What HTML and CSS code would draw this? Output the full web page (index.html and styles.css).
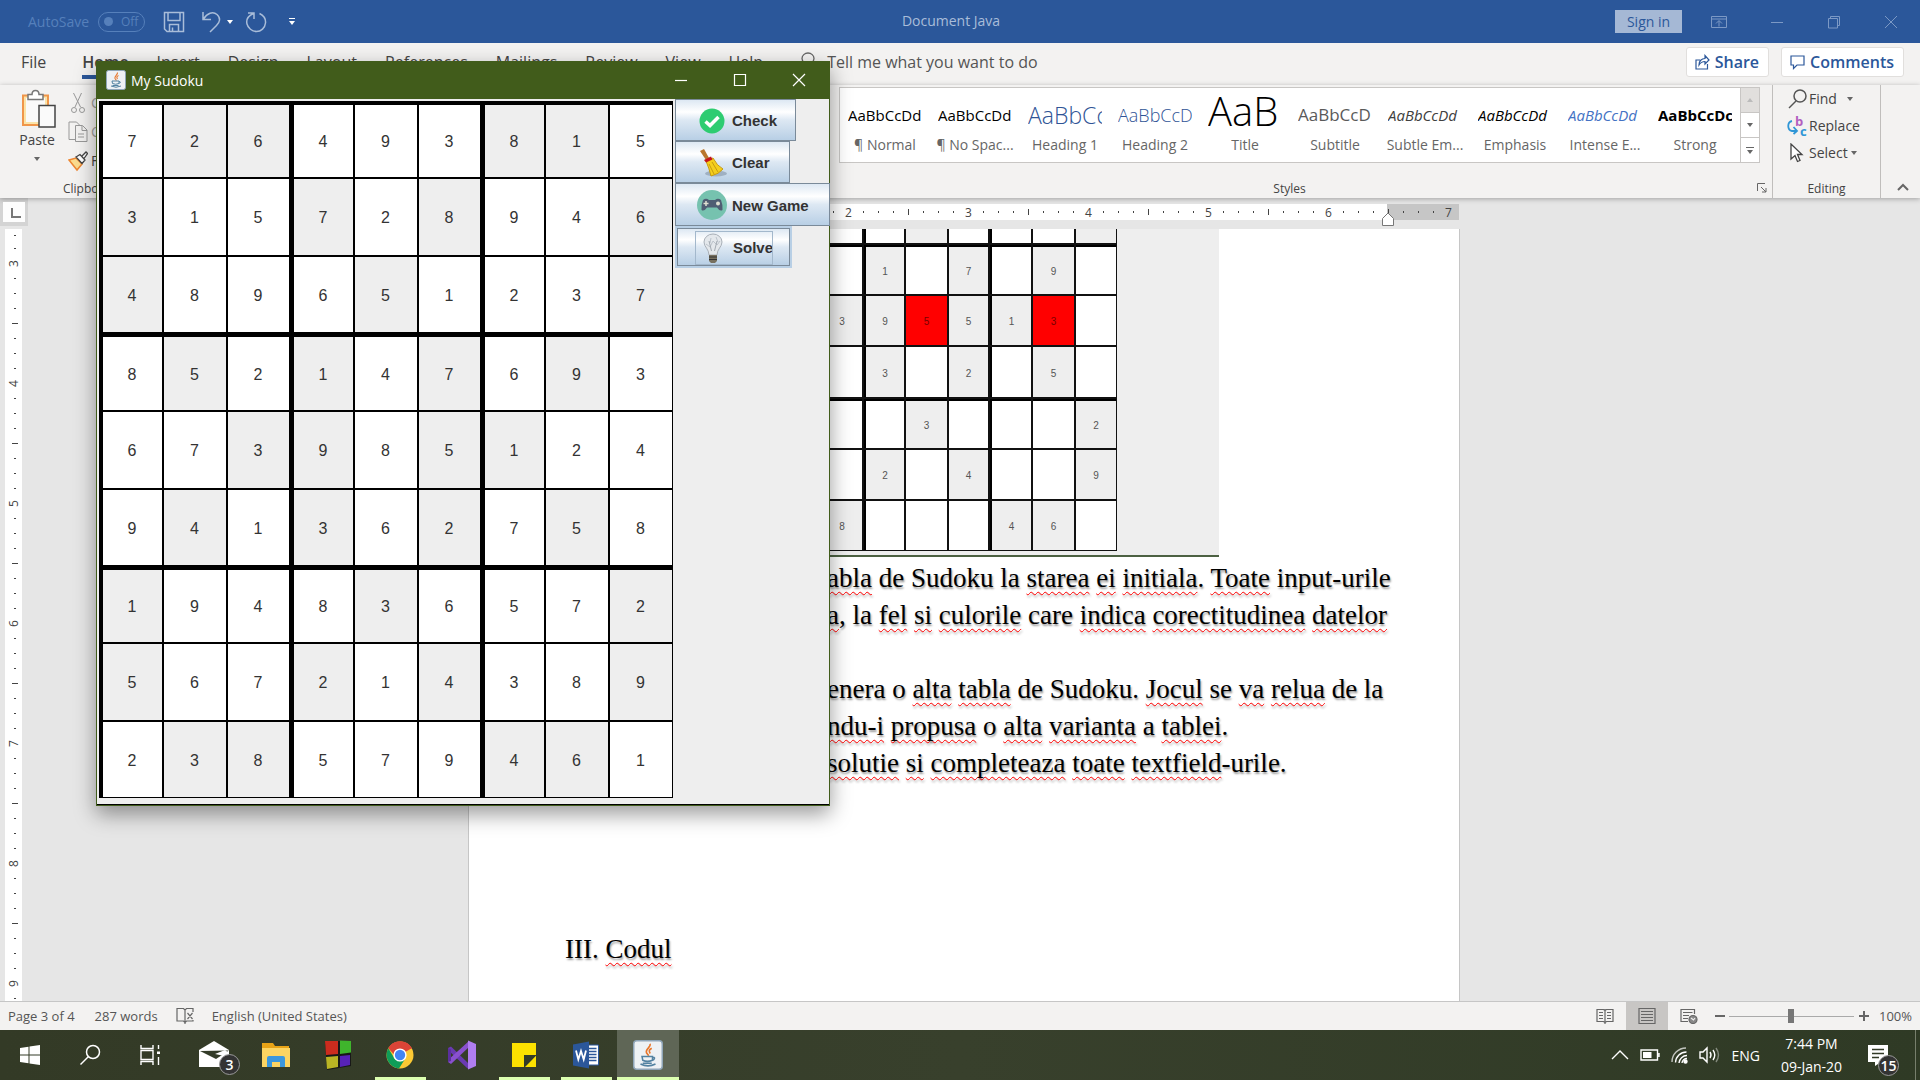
FILE: index.html
```html
<!DOCTYPE html>
<html lang="en">
<head>
<meta charset="utf-8">
<title>Document Java - Word</title>
<link rel="stylesheet" href="styles.css">
</head>
<body>
<div class="word">
  <header class="titlebar">
    <div class="quick">
      <span class="autosave">AutoSave</span>
      <button class="toggle" aria-label="AutoSave off"><i></i>Off</button>
      <button class="plain save" aria-label="Save"><svg width="22" height="22" viewBox="0 0 22 22"><path d="M1.500 1.500H20.500V20.500H4L1.500 18ZM5 1.500V9.500H17V1.500M6.500 20V13.500H15.500V20M9.500 20V16.500"/></svg></button>
      <button class="plain undo" aria-label="Undo"><svg width="22" height="22" viewBox="0 0 22 22"><path d="M2 1V8.500H10M2.500 8C6 2 12 0 16 3.500S19 11 15.500 14.500L9 21"/></svg></button>
      <span class="caret light"></span>
      <button class="plain redo" aria-label="Repeat"><svg width="22" height="22" viewBox="0 0 22 22"><path d="M3 2H9V8M8.500 2.500C3 5 1 9 2 13S7 20.500 11.500 20.500 20 17 20.500 12 18.500 4.500 14.500 2.500"/></svg></button>
      <span class="customize"><span class="caret light"></span></span>
    </div>
    <div class="doc-title">Document Java</div>
    <div class="win-tools">
      <button class="signin">Sign in</button>
      <button class="plain" aria-label="Ribbon display options"><svg width="16" height="14" viewBox="0 0 16 14"><path d="M.5 1.500H15.500V12.500H.5ZM.5 4H15.500M8 11.500V6M5 8.500 8 5.500 11 8.500"/></svg></button>
      <button class="plain" aria-label="Minimize"><svg width="14" height="14" viewBox="0 0 14 14"><path d="M1 7.500H13"/></svg></button>
      <button class="plain" aria-label="Restore"><svg width="14" height="14" viewBox="0 0 14 14"><path d="M1.500 3.500H10.500V13H1.500ZM3.500 3.500V1.500H12.500V10.500H10.500"/></svg></button>
      <button class="plain" aria-label="Close"><svg width="14" height="14" viewBox="0 0 14 14"><path d="M1 1 13 13M13 1 1 13"/></svg></button>
    </div>
  </header>

  <nav class="tabs">
    <a href="#">File</a>
    <a href="#" class="active">Home</a>
    <a href="#">Insert</a>
    <a href="#">Design</a>
    <a href="#">Layout</a>
    <a href="#">References</a>
    <a href="#">Mailings</a>
    <a href="#">Review</a>
    <a href="#">View</a>
    <a href="#">Help</a>
    <a href="#" class="tell"><svg width="14" height="20" viewBox="0 0 14 20"><path d="M4.500 14C4.500 11 1 10 1 6.500A6 5.500 0 0 1 13 6.500C13 10 9.500 11 9.500 14ZM4.500 17H9.500"/></svg>Tell me what you want to do</a>
    <span class="tab-actions">
      <button class="pill"><svg width="15" height="16" viewBox="0 0 15 16"><path d="M5 6H1V15H12.500V10M4 11C4 7 6.500 4.500 10 4.500V1.500L14 6 10 10V7.500C7.500 7.500 5.500 8.500 4 11Z"/></svg>Share</button>
      <button class="pill"><svg width="15" height="16" viewBox="0 0 15 16"><path d="M1 2H14V11H7L3.500 14.500V11H1Z"/></svg>Comments</button>
    </span>
  </nav>

  <section class="ribbon">
    <div class="clipboard">
      <div class="clip-tools">
        <button class="paste">
          <svg width="40" height="42" viewBox="0 0 40 42"><g transform="translate(4 1)"><path d="M2 6.500H27V36H2Z" fill="#fbe3a7" stroke="#f0964a" stroke-width="2"/><path d="M5 9H24V33H5Z" fill="#fafafa"/><path d="M7 10.500V5.500H11C11 0 18 0 18 5.500H22V10.500Z" fill="#fff" stroke="#777" stroke-width="1.500"/><path d="M18 16.500H34V38H18Z" fill="#fafafa" stroke="#444" stroke-width="1.500"/></g></svg>
          <span>Paste</span>
          <span class="caret"></span>
        </button>
        <div class="clip-list">
          <button><svg width="20" height="22" viewBox="0 0 20 22"><path d="M5.500 1 12.500 15M13.500 1 7 15" stroke="#999"/><circle cx="6" cy="18" r="2.500" stroke="#999"/><circle cx="14" cy="18" r="2.500" stroke="#999"/></svg>Cut</button>
          <button><svg width="20" height="22" viewBox="0 0 20 22"><path d="M7 18.500H1V1H8.500L11.500 4M7.500 4.500H14.500L19 9V20.500H7.500ZM14 5V9.500H19M10 13H16M10 16H16" stroke="#999"/></svg>Copy</button>
          <button class="painter"><svg width="20" height="22" viewBox="0 0 20 22"><path d="M1 10 8 8 14 14 9 20Z" fill="#fbdc8f" stroke="#ed8733" stroke-width="1.500"/><path d="M8 7 12 4.500 17 10 14 13.500ZM14 6 18 2 19.500 3.500 16 8.500" fill="#fff" stroke="#444" stroke-width="1.300"/></svg>Format Painter</button>
        </div>
      </div>
      <div class="group-label">Clipboard</div>
    </div>

    <div class="styles">
      <div class="gallery">
        <div class="style-items">
          <button><b class="s-normal">AaBbCcDd</b><span>¶ Normal</span></button>
          <button><b class="s-normal">AaBbCcDd</b><span>¶ No Spac...</span></button>
          <button><b class="s-h1">AaBbCc</b><span>Heading 1</span></button>
          <button><b class="s-h2">AaBbCcD</b><span>Heading 2</span></button>
          <button><b class="s-title">AaB</b><span>Title</span></button>
          <button><b class="s-sub">AaBbCcD</b><span>Subtitle</span></button>
          <button><b class="s-subtle">AaBbCcDd</b><span>Subtle Em...</span></button>
          <button><b class="s-emph">AaBbCcDd</b><span>Emphasis</span></button>
          <button><b class="s-intense">AaBbCcDd</b><span>Intense E...</span></button>
          <button><b class="s-strong">AaBbCcDc</b><span>Strong</span></button>
        </div>
        <div class="gallery-scroll">
          <button class="off" aria-label="Scroll up"><span class="caret up"></span></button>
          <button aria-label="Scroll down"><span class="caret"></span></button>
          <button class="more" aria-label="More styles"><span class="caret"></span></button>
        </div>
      </div>
      <div class="group-label">Styles</div>
      <button class="plain launcher" aria-label="Styles pane"><svg width="10" height="10" viewBox="0 0 10 10"><path d="M.5 8V.5H8M4 4 9 9M9 5V9H5"/></svg></button>
    </div>

    <div class="editing">
      <button><svg width="22" height="20" viewBox="0 0 22 20"><circle cx="13" cy="7" r="6" stroke="#555" stroke-width="1.500"/><path d="M9 12 2 19" stroke="#555" stroke-width="1.500"/></svg>Find<span class="caret"></span></button>
      <button><svg class="swap" width="22" height="22" viewBox="0 0 22 22"><path d="M5 6C0 7 0 15 5 16H9M6.500 12 10 16 6.500 19" stroke="#2f96d6" stroke-width="1.800"/><text x="8" y="11" fill="#b25fc0">b</text><text x="13" y="21" fill="#2f96d6">c</text></svg>Replace</button>
      <button class="select"><svg width="22" height="20" viewBox="0 0 22 20"><path d="M4 1V16L8 12.500 10.500 18.500 13 17.500 10.500 11.500H15Z" fill="#fff" stroke="#444" stroke-width="1.300"/></svg>Select<span class="caret"></span></button>
      <div class="group-label">Editing</div>
    </div>
    <button class="plain collapse" aria-label="Collapse the ribbon"><svg width="12" height="8" viewBox="0 0 12 8"><path d="M1 7 6 2 11 7" stroke-width="2"/></svg></button>
  </section>

  <main class="workspace">
    <div class="side">
      <div class="tabstop"><i></i></div>
      <div class="vruler" id="vruler"></div>
    </div>
    <div class="canvas">
      <div class="hruler"><div class="ticks" id="hruler"></div><svg class="indent" width="12" height="14" viewBox="0 0 12 14"><path d="M.5 13.500V6.500L6 1 11.500 6.500V13.500Z" fill="#fff" stroke="#777"/></svg></div>
      <article class="sheet">
        <figure class="shot"><div class="mini" id="mini"></div></figure>
        <p><span class="lead"><u>t</u></span><u>abla</u> de Sudoku la <u>starea</u> <u>ei</u> <u>initiala</u>. <u>Toate</u> input-urile</p>
        <p><span class="lead"></span><u>a</u>, la <u>fel</u> <u>si</u> <u>culorile</u> care <u>indica</u> <u>corectitudinea</u> <u>datelor</u></p>
        <p></p>
        <p><span class="lead">g</span>enera o <u>alta</u> <u>tabla</u> de Sudoku. <u>Jocul</u> se <u>va</u> <u>relua</u> de la</p>
        <p><span class="lead"><u>a</u></span><u>ndu-i</u> <u>propusa</u> o <u>alta</u> <u>varianta</u> a <u>tablei</u>.</p>
        <p><span class="lead"></span><u>solutie</u> <u>si</u> <u>completeaza</u> <u>toate</u> <u>textfield</u>-urile.</p>
        <p class="chapter">III. <u>Codul</u></p>
      </article>
    </div>
  </main>

  <footer class="status">
    <span>Page 3 of 4</span>
    <span>287 words</span>
    <svg class="proof" width="18" height="18" viewBox="0 0 18 18"><path d="M9 3 7.500 1.500H1V14H7.500L9 15.500V3L10.500 1.500H17V5M9 15.500V17M9 15.500 10.500 14H17V13M11.500 6 16.500 12M16.500 6 11.500 12"/></svg>
    <span>English (United States)</span>
    <div class="views">
      <button aria-label="Read mode"><svg width="18" height="16" viewBox="0 0 18 16"><path d="M9 2.500 7.500 1.500H1V13.500H7.500L9 14.500 10.500 13.500H17V1.500H10.500ZM9 1V16M3 4.500H7M3 7.500H7M3 10.500H7M11 4.500H15M11 7.500H15M11 10.500H15"/></svg></button>
      <button class="on" aria-label="Print layout"><svg width="18" height="16" viewBox="0 0 18 16"><path d="M1 .5H17V15.500H1ZM3 3.500H15M3 6.500H15M3 9.500H15M3 12.500H15"/></svg></button>
      <button aria-label="Web layout"><svg width="18" height="16" viewBox="0 0 18 16"><path d="M8 13.500H1V1.500H14.500V6M3 4.500H12.500M3 7.500H9M3 10.500H8"/><circle cx="13" cy="11.500" r="4" fill="#888"/><path d="M11 10 13.500 12 15 10" stroke="#eee"/></svg></button>
    </div>
    <div class="zoom">
      <button class="plain" aria-label="Zoom out"><svg width="12" height="12" viewBox="0 0 12 12"><path d="M1 6H11" stroke-width="2"/></svg></button>
      <input type="range" min="0" max="100" value="50" aria-label="Zoom">
      <button class="plain" aria-label="Zoom in"><svg width="12" height="12" viewBox="0 0 12 12"><path d="M1 6H11M6 1V11" stroke-width="2"/></svg></button>
      <span>100%</span>
    </div>
  </footer>
</div>

<div class="taskbar">
  <button class="sys" aria-label="Start"><svg width="22" height="22" viewBox="0 0 22 22"><path fill="#fff" d="M1 4 9.500 2.700V10.500H1ZM10.500 2.500 21 1V10.500H10.500ZM1 11.500H9.500V19.300L1 18ZM10.500 11.500H21V21L10.500 19.500Z"/></svg></button>
  <button class="sys" aria-label="Search"><svg width="22" height="22" viewBox="0 0 22 22" stroke="#fff" stroke-width="1.500"><circle cx="14" cy="8" r="6.500"/><path d="M9.500 12.500 1.500 20.500"/></svg></button>
  <button class="sys" aria-label="Task view"><svg width="22" height="22" viewBox="0 0 22 22" stroke="#fff" stroke-width="1.400"><path d="M2 1V4.500H14V1M2 21V17.500H14V21M2 6.500H14V15.500H2ZM19.500 1V5M19.500 13V21"/><path d="M18 7.500H21V10H18Z" fill="#fff" stroke="none"/></svg></button>
  <button class="app" aria-label="Mail"><svg width="36" height="36" viewBox="0 0 36 36"><path d="M3 13 18 4 33 13V30H3Z" fill="#fff"/><path d="M4 14 33 13.500 20 22Z" fill="#333b28"/><path d="M19 17 29 13 33 16V20Z" fill="#fff"/></svg><em class="badge">3</em></button>
  <button class="app" aria-label="File Explorer"><svg width="30" height="28" viewBox="0 0 30 28"><path d="M1 2H12L14 5H28V25H1Z" fill="#e8a317"/><path d="M1 7H29V26H1Z" fill="#fcd462"/><path d="M6 26V17Q6 15 8 15H22Q24 15 24 17V26H19V21H11V26Z" fill="#3c97dc"/></svg></button>
  <button class="app" aria-label="Blocks"><svg width="28" height="32" viewBox="0 0 28 32"><path d="M1 2 27 2V27L3 31Z" fill="#181818"/><path d="M1 2H14V15L2 16Z" fill="#cc2c1e"/><path d="M16 1.500 27 2V13.500L16 15Z" fill="#3fb52c"/><path d="M2 18 14 17V28L3 30Z" fill="#b9b424"/><path d="M16 17 26 16V26L16 28Z" fill="#5722b8"/></svg></button>
  <button class="app open" aria-label="Chrome"><svg width="28" height="28" viewBox="0 0 28 28"><circle cx="14" cy="14" r="13.500" fill="#fcc934"/><path d="M14 14 2.300 7.300A13.500 13.500 0 0 1 25.700 7.300Z" fill="#db4437"/><path d="M14 7.500H26A13.500 13.500 0 0 0 2.300 7.300L8.500 14Z" fill="#db4437"/><path d="M2.300 7.300A13.500 13.500 0 0 0 13 27.500L19 18 14 20.500 8.500 17.500Z" fill="#0f9d58"/><circle cx="14" cy="14" r="6.600" fill="#fff"/><circle cx="14" cy="14" r="5.200" fill="#4285f4"/></svg></button>
  <button class="app" aria-label="Visual Studio"><svg width="30" height="30" viewBox="0 0 30 30"><path d="M1 8 4 6.500 22 24 22 29 20 28 1 10Z" fill="#6a3ab2"/><path d="M1 22 4 24 22 7V1L1 20Z" fill="#8a50cf"/><path d="M1 8 4 9.500V21L1 22Z" fill="#5b2f9e"/><path d="M21 0.500 29 4V26L21 29.500Z" fill="#b07df0"/></svg></button>
  <button class="app open" aria-label="Sticky Notes"><svg width="24" height="24" viewBox="0 0 24 24"><path d="M0 0H24V24H0Z" fill="#fce100"/><path d="M24 12V13L14 24H12V12Z" fill="#333b28"/><path d="M24 13V24H13Z" fill="#fce100"/></svg></button>
  <button class="app open" aria-label="Word"><svg width="28" height="28" viewBox="0 0 28 28"><path d="M14 4H26.500V24H14Z" fill="#fff" stroke="#2b579a"/><path d="M17 7.500H24.500M17 10.500H24.500M17 13.500H24.500M17 16.500H24.500M17 19.500H24.500" stroke="#2b579a" stroke-width="1.500"/><path d="M1 3.500 17 .5V27.500L1 24.500Z" fill="#2b579a"/><path d="M4 9.500 6.300 18.500 9 10 11.700 18.500 14 9.500" fill="none" stroke="#fff" stroke-width="1.800"/></svg></button>
  <button class="app open current" aria-label="My Sudoku"><svg width="30" height="30" viewBox="0 0 20 20"><use href="#java"/></svg></button>

  <div class="tray">
    <svg width="18" height="10" viewBox="0 0 18 10"><path d="M1 9 9 1 17 9"/></svg>
    <svg width="20" height="12" viewBox="0 0 20 12"><path d="M1 1H17.500V11H1ZM19 4V8"/><path d="M3 3H11.500V9H3Z" fill="#fff" stroke="none"/></svg>
    <svg width="17" height="17" viewBox="0 0 17 17"><path d="M1 15A14 14 0 0 1 15 1" opacity=".7"/><path d="M4.500 15.500A11 11 0 0 1 15.500 5M8 16A8 8 0 0 1 16 8.500M11 16A5 5 0 0 1 16 11.500"/><circle cx="14.500" cy="14.500" r="1.500" fill="#fff"/></svg>
    <svg width="22" height="18" viewBox="0 0 22 18"><path d="M1 6H4L8 2V16L4 12H1ZM11 6Q13 9 11 12M14 4Q17.500 9 14 14"/><path d="M17 2Q22 9 17 16" opacity=".4"/></svg>
    <span>ENG</span>
  </div>
  <div class="clock"><span>7:44 PM</span><span>09-Jan-20</span></div>
  <button class="notes" aria-label="Notifications"><svg width="22" height="22" viewBox="0 0 22 22"><path d="M1 1H21V18H14L8 22V18H1Z" fill="#fff"/><path d="M5 5.500H17M5 9.500H17M5 13.500H12" stroke="#333b28" stroke-width="1.500"/></svg><em class="badge">15</em></button>
</div>

<section class="sudoku">
  <header>
    <svg width="20" height="20" viewBox="0 0 20 20"><g id="java"><rect x=".5" y=".5" width="19" height="19" rx="2" fill="#eef1f4" stroke="#8fa5b8"/><path d="M11.500 2.500C12 5 8 6 9 8.500L10.500 10.500M12.500 5.500C10.500 6.500 10.500 7.500 11.500 9" fill="none" stroke="#e8762b" stroke-width="1.100"/><path d="M6 11H13V13.500Q9.500 15 6.500 13.500ZM13 11.500Q15.500 11.500 13.500 13.500M5 16Q10 18.500 15 16M6.500 15.500H12.500" fill="none" stroke="#5382a1" stroke-width="1"/></g></svg>
    <h1>My Sudoku</h1>
    <button aria-label="Minimize"><svg width="14" height="14" viewBox="0 0 14 14"><path d="M1 7.500H13"/></svg></button>
    <button aria-label="Maximize"><svg width="14" height="14" viewBox="0 0 14 14"><path d="M1.500 1.500H12.500V12.500H1.500Z"/></svg></button>
    <button aria-label="Close"><svg width="14" height="14" viewBox="0 0 14 14"><path d="M1 1 13 13M13 1 1 13"/></svg></button>
  </header>
  <div class="game">
    <div class="board" id="board"></div>
    <div class="actions">
      <button class="w-check"><svg width="30" height="30" viewBox="0 0 30 30"><circle cx="15" cy="15" r="12.500" fill="#2ecc71"/><path d="M8.500 15.500 13 19.500 21.500 11" fill="none" stroke="#fff" stroke-width="3.500"/></svg>Check</button>
      <button class="w-clear"><svg width="30" height="30" viewBox="0 0 30 30"><ellipse cx="19" cy="25.500" rx="11" ry="3" fill="#9fb0c2"/><path d="M3 3 7 1 12 10 9 12Z" fill="#b9772e"/><path d="M9 13 16 10Q20 18 26 21Q22 26 14 28Q12 20 9 13Z" fill="#f5cf1b" stroke="#c79a10"/><path d="M12 16 17 26M15 14 21 24" stroke="#c79a10"/><path d="M7 12 14 8.500 15.500 11.500 9 14.500Z" fill="#c4161c"/></svg>Clear</button>
      <button class="w-new"><svg width="30" height="30" viewBox="0 0 30 30"><circle cx="15" cy="15" r="15" fill="#76c2af"/><path d="M6 10Q9 7.500 12 10H18Q21 7.500 24 10 26 15 25.500 20 23 22 20 17.500H10Q7 22 4.500 20 4 15 6 10Z" fill="#4f5d73"/><path d="M9 11V16M6.500 13.500H11.500" stroke="#e0e0d1" stroke-width="1.500"/><circle cx="21" cy="13.500" r="2" fill="#e0e0d1"/></svg>New Game</button>
      <button class="w-solve"><svg width="30" height="30" viewBox="0 0 30 30"><path d="M11 22C11 16 6 14 6 9A9 8 0 0 1 24 9C24 14 19 16 19 22Z" fill="#e4e8ec" stroke="#a9b0b8"/><path d="M8 11 12 14 15 8 19 12 22 8M13 5 12 10M18 4 20 9" fill="none" stroke="#bcc3cb"/><path d="M11 8 13.500 18M19 8 16.500 18" fill="none" stroke="#a3aab2"/><path d="M11 22H19V28L17 30H13L11 28Z" fill="#77705f"/><path d="M11 24H19M11 26.500H19" stroke="#333"/></svg>Solve</button>
    </div>
  </div>
</section>
<script src="script.js"></script>
</body>
</html>
```

FILE: styles.css
```css
* { box-sizing: border-box; }
body {
  margin: 0;
  height: 100vh;
  display: flex;
  flex-direction: column;
  overflow: hidden;
  font-family: "Open Sans", "Noto Sans", sans-serif;
  font-size: 14px;
  color: #444;
}
button {
  font: inherit;
  color: inherit;
  background: none;
  border: 0;
  padding: 0;
  display: flex;
  align-items: center;
}
a { color: inherit; text-decoration: none; }
svg { fill: none; flex: none; }
.caret {
  border: 3px solid transparent;
  border-top: 4px solid #666;
  border-bottom: 0;
}
.caret.light { border-top-color: #fff; }
.caret.up { border-top: 0; border-bottom: 4px solid #bbb; }

.word { flex: 1; min-height: 0; display: flex; flex-direction: column; }

/* title bar */
.titlebar {
  height: 43px;
  flex: none;
  display: grid;
  grid-template-columns: 1fr auto 1fr;
  align-items: center;
  background: #2b579a;
  color: #a9bdd9;
}
.titlebar svg { stroke: #a9bdd9; stroke-width: 1.5; }
.quick { display: flex; align-items: center; padding-left: 28px; }
.autosave { color: #5680bb; width: 70px; }
.toggle {
  width: 47px;
  height: 20px;
  border: 1px solid #5680bb;
  border-radius: 10px;
  color: #5680bb;
  font-size: 12px;
  gap: 8px;
  padding-left: 5px;
}
.toggle i { width: 9px; height: 9px; border-radius: 5px; background: #5680bb; }
.save { margin-left: 18px; }
.undo { margin: 0 4px 0 16px; }
.redo { margin-left: 12px; }
.customize { margin-left: 22px; border-top: 1px solid #fff; padding-top: 2px; height: 8px; }
.customize .caret { display: block; }
.doc-title { padding: 0 18px 3px 0; }
.win-tools { display: flex; align-items: center; justify-content: flex-end; padding-right: 22px; gap: 43px; }
.win-tools svg { stroke: #7c99c5; stroke-width: 1; }
.signin {
  width: 67px;
  height: 23px;
  margin-right: -14px;
  justify-content: center;
  background: #a5b8d5;
  color: #2b579a;
}

/* tabs */
.tabs {
  height: 42px;
  flex: none;
  display: flex;
  gap: 28px;
  padding: 0 16px 0 21px;
  background: #f3f2f1;
  font-size: 16px;
  line-height: 38px;
}
.tabs > a { white-space: nowrap; height: 36px; }
.tabs .active { margin-left: 8px; font-weight: 600; border-bottom: 4px solid #2b579a; }
.tabs .tell { display: flex; align-items: center; gap: 12px; margin-left: 10px; height: 38px; color: #555; }
.tell svg { stroke: #666; stroke-width: 1.3; }
.tab-actions { margin-left: auto; display: flex; gap: 12px; padding-top: 4px; }
.pill {
  height: 30px;
  padding: 0 9px 0 8px;
  gap: 5px;
  border: 1px solid #e1dfdd;
  border-radius: 3px;
  background: #fff;
  color: #2b579a;
  font-weight: 600;
}
.pill svg { stroke: #2b579a; stroke-width: 1.2; }

/* ribbon */
.ribbon {
  height: 113px;
  flex: none;
  display: flex;
  background: #f3f2f1;
  box-shadow: 0 1px 5px rgba(0, 0, 0, .3);
  position: relative;
}
.group-label { text-align: center; font-size: 12px; line-height: 16px; }
.clipboard { width: 200px; display: flex; flex-direction: column; justify-content: space-between; padding: 3px 0 1px 18px; }
.clipboard .group-label { padding-left: 45px; text-align: left; }
.clip-tools { display: flex; gap: 12px; height: 88px; }
.paste { flex-direction: column; width: 38px; }
.paste span:last-child { margin-top: 7px; }
.paste > span { line-height: 20px; }
.clip-list button { gap: 3px; height: 29px; color: #a19f9d; white-space: nowrap; line-height: 20px; }
.clip-list .painter { color: #444; }
.styles { flex: 1; margin-left: 639px; position: relative; padding-top: 2px; display: flex; flex-direction: column; }
.styles > .group-label { margin-top: auto; padding: 0 32px 1px 0; }
.gallery { height: 76px; margin-right: 12px; display: flex; border: 1px solid #c8c6c4; background: #fff; }
.style-items { flex: 1; display: grid; grid-template-columns: repeat(10, 90px); overflow: hidden; }
.style-items button { flex-direction: column; overflow: hidden; color: #666; min-width: 0; }
.style-items b {
  width: 74px;
  height: 46px;
  line-height: 54px;
  overflow: hidden;
  white-space: nowrap;
  text-align: left;
  font-weight: 400;
  font-size: 15px;
  color: #000;
}
.style-items span { line-height: 22px; white-space: nowrap; }
.style-items .s-h1 { font-size: 23px; font-weight: 300; color: #2f5496; }
.style-items .s-h2 { font-size: 18px; font-weight: 300; color: #2f5496; }
.style-items .s-title { font-size: 40px; font-weight: 300; line-height: 46px; }
.style-items .s-sub { color: #5a5a5a; font-size: 17px; }
.style-items .s-subtle { color: #404040; font-style: italic; }
.style-items .s-emph { font-style: italic; }
.style-items .s-intense { color: #4472c4; font-style: italic; }
.style-items .s-strong { font-weight: 700; }
.gallery-scroll { width: 19px; display: flex; flex-direction: column; border-left: 1px solid #c8c6c4; }
.gallery-scroll button { flex: 1; flex-direction: column; justify-content: center; border-bottom: 1px solid #c8c6c4; gap: 2px; }
.gallery-scroll button:last-child { border-bottom: 0; }
.gallery-scroll .off { background: #e1dfdd; }
.more::before { content: ""; width: 8px; height: 1px; background: #666; }
.launcher { position: absolute; right: 5px; bottom: 5px; }
.launcher svg, .collapse svg { stroke: #666; }
.editing {
  width: 109px;
  border: solid #c0bebc;
  border-width: 0 1px;
  display: flex;
  flex-direction: column;
  padding: 0 0 1px 14px;
}
.editing button { height: 27px; line-height: 20px; }
.editing .caret { margin-left: 10px; }
.editing .select .caret { margin-left: 3px; }
.editing .group-label { margin: auto 14px 0 0; }
.swap text { font: 700 13px "Open Sans", sans-serif; }
.collapse { width: 39px; justify-content: center; align-self: flex-end; padding: 0 0 2px 4px; height: 20px; }

/* document area */
.workspace { flex: 1; min-height: 0; display: flex; background: #e6e6e6; }
.side { width: 28px; display: flex; flex-direction: column; overflow: hidden; }
.tabstop { flex: none; height: 28px; padding: 4px 3px; background: #d4d4d4; margin-bottom: 3px; display: flex; }
.tabstop i { flex: 1; background: #fdfdfd; position: relative; }
.tabstop i::after { content: ""; position: absolute; left: 8px; bottom: 4px; width: 8px; height: 8px; border: solid #777; border-width: 0 0 2px 2px; }
.vruler { flex: 1; width: 17px; margin-left: 5px; background: #fff; overflow: hidden; }
.vruler span { height: 15px; display: flex; align-items: center; justify-content: center; padding-left: 3px; }
.vruler span:first-child { height: 12px; }
.vruler .num { transform: rotate(-90deg); padding: 0; }
.vruler .dot::before { content: ""; width: 2px; height: 1px; background: #444; }
.vruler .half::before { content: ""; width: 6px; height: 1px; background: #444; }
.canvas { flex: 1; display: flex; flex-direction: column; padding: 6px 0 0 440px; }
.hruler { position: relative; width: 991px; margin-bottom: 9px; }
.ticks { display: flex; height: 16px; padding-left: 13px; background: linear-gradient(to right, #fff 919px, #c6c6c6 0); }
.ticks span { width: 15px; display: flex; align-items: center; justify-content: center; }
.ticks .dot::before { content: ""; width: 1px; height: 2px; background: #444; }
.ticks .half::before { content: ""; width: 1px; height: 6px; background: #444; }
.ticks, .vruler { font-size: 12px; line-height: 15px; }
.indent { position: absolute; left: 914px; top: 8px; }
.sheet {
  width: 992px;
  flex: 1;
  min-height: 0;
  overflow: hidden;
  border: solid #c6c6c6;
  border-width: 0 1px;
  padding-left: 96px;
  background: #fff;
  color: #000;
  font: 27px/37px "Liberation Serif", "Times New Roman", serif;
}
.sheet p { margin: 0; min-height: 37px; white-space: nowrap; text-shadow: 1px 2px 2px rgba(0, 0, 0, .4); }
.sheet .chapter { margin-top: 149px; }
.sheet u { text-decoration: underline wavy #f00 1px; text-underline-offset: 4px; text-decoration-skip-ink: none; }
.lead { display: inline-block; width: 262px; text-align: right; }
.shot { margin: 0 0 3px 170px; width: 484px; height: 328px; padding-left: 2px; background: #eee; border-bottom: 2px solid #4c6142; }
.mini {
  width: 380px;
  display: grid;
  gap: 2px;
  grid-template-columns: 38px 41px 40px 40px 41px 39px 41px 41px 40px;
  grid-template-rows: 14px 49px 49px 50px 49px 49px 49px;
  padding: 0 1px 1px 2px;
  background: #111;
}
.mini .cell { font: 10px "Liberation Sans", Arial, sans-serif; color: #555; background: #fff; display: flex; align-items: center; justify-content: center; padding-top: 2px; }
.mini .given { background: #eee; }
.mini .wrong { background: #f00; color: #700; }
.mini .block-left { border-left: 2px solid #000; }
.mini .block-top { border-top: 2px solid #000; }

/* status bar */
.status {
  height: 29px;
  flex: none;
  display: flex;
  align-items: center;
  gap: 20px;
  padding-left: 8px;
  border-top: 1px solid #c6c6c6;
  background: #f3f2f1;
  font-size: 13px;
  color: #555;
}
.status svg { stroke: #666; stroke-width: 1.2; }
.status .proof { margin: 0 -2px; }
.views { margin-left: auto; display: flex; align-self: stretch; }
.views button { width: 42px; justify-content: center; }
.views .on { background: #c8c6c4; }
.zoom { display: flex; align-items: center; margin-left: -16px; padding-right: 8px; }
.zoom span { margin-left: 9px; }
.zoom input { appearance: none; width: 125px; height: 14px; margin: 0 4px 0 3px; background: linear-gradient(#aaa, #aaa) center / 100% 1px no-repeat; }
.zoom input::-webkit-slider-thumb { appearance: none; width: 6px; height: 14px; background: #777; }

/* taskbar */
.taskbar { height: 50px; flex: none; display: flex; background: linear-gradient(90deg, #333a26, #38402c 50%, #2f3a25); color: #fff; }
.sys { width: 60px; justify-content: center; }
.sys + .app { margin-left: 3px; }
.app { width: 62px; justify-content: center; position: relative; }
.app.open::after { content: ""; position: absolute; bottom: 0; left: 6px; right: 5px; height: 3px; background: #dcffb0; }
.app.current { background: #5f6656; }
.app.current::after { left: 0; right: 0; }
.badge {
  position: absolute;
  right: 5px;
  bottom: 5px;
  width: 21px;
  height: 21px;
  border: 1px solid #999;
  border-radius: 50%;
  background: #333;
  font: 600 14px/19px "Open Sans", sans-serif;
  text-align: center;
}
.tray { margin-left: auto; display: flex; align-items: center; gap: 11px; }
.tray svg { stroke: #fff; stroke-width: 1.4; }
.clock { width: 103px; display: flex; flex-direction: column; align-items: center; justify-content: center; line-height: 23px; }
.notes { width: 53px; position: relative; padding-left: 4px; margin-right: 4px; border-right: 1px solid #777f6c; }
.notes .badge { right: 16px; bottom: 4px; }

/* game window */
.sudoku {
  position: absolute;
  left: 96px;
  top: 61px;
  width: 734px;
  height: 745px;
  display: flex;
  flex-direction: column;
  border: 1px solid #415c1b;
  border-top: 0;
  background: #eee;
  box-shadow: 0 8px 20px rgba(0, 0, 0, .4), inset 0 -1px #000;
}
.sudoku header { height: 38px; flex: none; display: flex; align-items: center; padding: 0 1px 0 9px; background: #415c1b; color: #fff; }
.sudoku h1 { flex: 1; margin: 0 0 0 5px; font-size: 14px; font-weight: 400; }
.sudoku header button { width: 59px; height: 38px; justify-content: center; }
.sudoku header button svg { stroke: #fff; stroke-width: 1.2; }
.game { display: flex; gap: 2px; padding-left: 2px; }
.board {
  width: 574px;
  margin-top: 2px;
  display: grid;
  gap: 2px;
  grid-template-columns: 59px 62px 61px 62px 62px 61px 62px 62px 62px;
  grid-template-rows: 72px 76px 75px 76px 76px 75px 75px 76px 75px;
  padding: 4px 1px 1px 4px;
  background: #000;
}
.board .cell { display: flex; }
.board .block-left { padding-left: 3px; }
.board .block-top { padding-top: 3px; }
.board input { flex: 1; min-width: 0; border: 0; padding: 2px 1px 0 0; text-align: center; background: #fff; color: #333; font: 16px "Liberation Sans", Arial, sans-serif; }
.board .given input { background: #eee; }
.actions { display: flex; flex-direction: column; align-items: flex-start; }
.actions button {
  height: 42px;
  gap: 5px;
  padding: 1px 0 0 21px;
  border: 1px solid #7a8a99;
  background: linear-gradient(#dde8f3, #fff 30%, #dde8f3 50%, #b8cfe5);
  color: #333;
  font: 700 15px "Liberation Sans", Arial, sans-serif;
  white-space: nowrap;
}
.actions .w-check { width: 121px; }
.actions .w-clear { width: 115px; }
.actions .w-new { width: 155px; height: 43px; }
.actions .w-solve { width: 115px; margin: 1px 0 0 1px; padding-left: 20px; border: 2px solid #7a8a99; outline: 2px solid #b8cfe5; outline-offset: -1px; position: relative; height: 40px; }
.w-solve::after { content: ""; position: absolute; left: 17px; top: 2px; width: 76px; height: 32px; border: 1px solid #a3b8cc; }
```

FILE: script.js
```js
const solved = ["726493815", "315728946", "489651237", "852147693", "673985124", "941362758", "194836572", "567214389", "238579461"];
const given = [".##...##.", "#..#.#..#", "#...#...#", ".#.#.#.#.", "..##.##..", ".#.#.#.#.", "#...#...#", "#..#.#..#", ".##...##."];
const wrong = { "4,4": "5", "4,7": "3" };

function makeCell(r, c) {
  const cell = document.createElement("div");
  cell.className = "cell";
  if (given[r][c] === "#") cell.classList.add("given");
  if (c === 3 || c === 6) cell.classList.add("block-left");
  if (r === 3 || r === 6) cell.classList.add("block-top");
  return cell;
}

for (let r = 0; r < 9; r++) {
  for (let c = 0; c < 9; c++) {
    const cell = makeCell(r, c);
    const input = document.createElement("input");
    input.value = solved[r][c];
    input.setAttribute("aria-label", `Row ${r + 1}, column ${c + 1}`);
    cell.append(input);
    document.getElementById("board").append(cell);
  }
}

for (let r = 2; r < 9; r++) {
  for (let c = 0; c < 9; c++) {
    const cell = makeCell(r, c);
    if (r > 2 && given[r][c] === "#") cell.textContent = solved[r][c];
    if (wrong[`${r},${c}`]) {
      cell.classList.add("wrong");
      cell.textContent = wrong[`${r},${c}`];
    }
    document.getElementById("mini").append(cell);
  }
}

function addTicks(id, from, to) {
  for (let k = from; k <= to; k++) {
    const tick = document.createElement("span");
    const eighth = ((k % 8) + 8) % 8;
    tick.className = eighth === 0 ? "num" : eighth === 4 ? "half" : "dot";
    if (eighth === 0) tick.textContent = Math.abs(k / 8) || "";
    document.getElementById(id).append(tick);
  }
}
addTicks("hruler", -8, 56);
addTicks("vruler", 22, 73);
```
